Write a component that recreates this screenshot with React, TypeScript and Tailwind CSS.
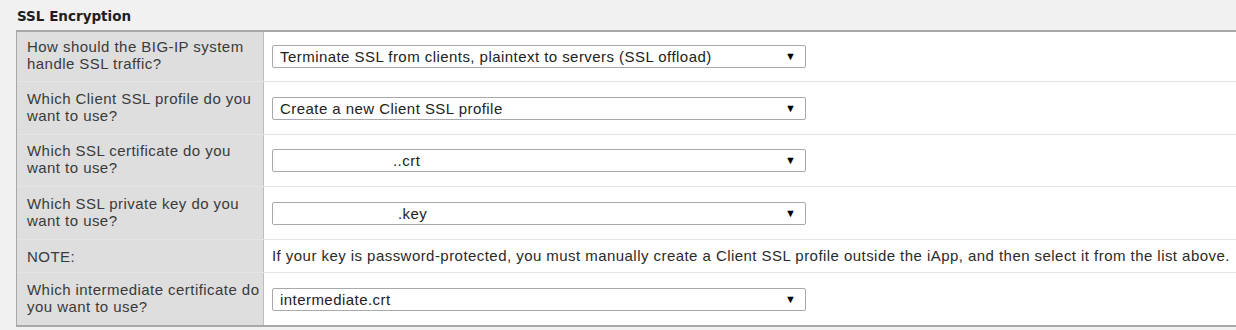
import React from 'react';

type Row = {
  label: string[];
  value?: string;
  pad?: string;
  note?: string;
  h: string;
};

const rows: Row[] = [
  { label: ['How should the BIG-IP system', 'handle SSL traffic?'], value: 'Terminate SSL from clients, plaintext to servers (SSL offload)', pad: 'pl-[7px]', h: 'h-[50px]' },
  { label: ['Which Client SSL profile do you', 'want to use?'], value: 'Create a new Client SSL profile', pad: 'pl-[7px]', h: 'h-[53px]' },
  { label: ['Which SSL certificate do you', 'want to use?'], value: '..crt', pad: 'pl-[120px]', h: 'h-[52px]' },
  { label: ['Which SSL private key do you', 'want to use?'], value: '.key', pad: 'pl-[125px]', h: 'h-[53px]' },
  { label: ['NOTE:'], note: 'If your key is password-protected, you must manually create a Client SSL profile outside the iApp, and then select it from the list above.', h: 'h-[33px]' },
  { label: ['Which intermediate certificate do', 'you want to use?'], value: 'intermediate.crt', pad: 'pl-[7px]', h: 'h-[52px]' },
];

const FakeSelect = ({ text, pad }: { text: string; pad: string }) => (
  <div className={`flex items-center w-[534px] h-[23px] bg-white border border-[#a9a9a9] rounded-[2px] ${pad} pr-[9px]`}>
    <span className="flex-1 whitespace-pre text-[15px] tracking-[0.45px] text-[#222] leading-none">{text}</span>
    <span className="text-[11px] text-black leading-none">▼</span>
  </div>
);

export default function App() {
  return (
    <div
      className="w-[1236px] h-[330px] bg-[#f1f1f1] overflow-hidden pt-[8px]"
      style={{ fontFamily: '"Liberation Sans", Arial, sans-serif' }}
    >
      <div
        className="pl-[17px] text-[13.5px] font-bold text-[#1e1e1e] leading-[16px] mb-[6px]"
        style={{ fontFamily: '"DejaVu Sans", Verdana, sans-serif' }}
      >
        SSL Encryption
      </div>
      <div className="ml-[16px] border-t-2 border-b-2 border-l border-[#a8a8a8] bg-white">
        {rows.map((r, i) => (
          <div key={i} className={`flex ${r.h} ${i < rows.length - 1 ? 'border-b border-[#e4e4e4]' : ''}`}>
            <div className={`w-[247px] shrink-0 bg-[#dedede] border-r border-[#bdbdbd] flex flex-col justify-center pl-[10px] ${r.label.length > 1 ? 'pb-[3px]' : ''} text-[15px] tracking-[0.45px] leading-[17px] text-[#3a3a3a]`}>
              {r.label.map((l, j) => (
                <div key={j} className="whitespace-nowrap">{l}</div>
              ))}
            </div>
            <div className="flex-1 flex items-center pl-[8px]">
              {r.value !== undefined ? (
                <FakeSelect text={r.value} pad={r.pad || ''} />
              ) : (
                <span className="text-[15px] tracking-[0.45px] text-[#2a2a2a] whitespace-nowrap">{r.note}</span>
              )}
            </div>
          </div>
        ))}
      </div>
    </div>
  );
}
